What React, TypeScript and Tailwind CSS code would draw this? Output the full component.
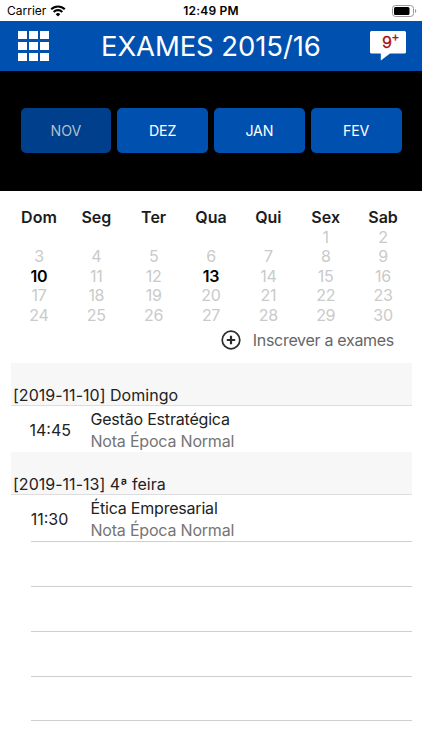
import React from "react";

const months = ["NOV", "DEZ", "JAN", "FEV"];
const weekDays = ["Dom", "Seg", "Ter", "Qua", "Qui", "Sex", "Sab"];
const leadingBlanks = 5;
const examDays = [10, 13];

const sections = [
    { title: "[2019-11-10] Domingo", time: "14:45", name: "Gestão Estratégica", info: "Nota Época Normal" },
    { title: "[2019-11-13] 4ª feira", time: "11:30", name: "Ética Empresarial", info: "Nota Época Normal" },
];

const StatusBar = () => (
    <div className="grid h-[21px] grid-cols-3 items-center bg-white pl-[7px] pr-[5px] text-black">
        <div className="flex items-center gap-[4px]">
            <span className="text-[12px] leading-none">Carrier</span>
            <svg width="16" height="12" viewBox="0 0 16 12" fill="none" stroke="black" strokeWidth="2.1">
                <path d="M1.2 4.3a9.6 9.6 0 0 1 13.6 0" />
                <path d="M3.7 6.9a6.1 6.1 0 0 1 8.6 0" />
                <path d="M8 11.5 5.7 9.2a3.2 3.2 0 0 1 4.6 0z" fill="black" stroke="none" />
            </svg>
        </div>
        <span className="-ml-0.5 text-center text-[12px] font-semibold leading-none tracking-[0.2px]">12:49 PM</span>
        <div className="flex justify-end">
            <svg width="25" height="12" viewBox="0 0 25 12">
                <rect x="0.5" y="0.5" width="21" height="11" rx="3" fill="none" stroke="#999" />
                <rect x="2" y="2" width="15.5" height="8" rx="1.5" fill="black" />
                <path d="M23 4v4a2.2 2.2 0 0 0 0-4z" fill="#999" />
            </svg>
        </div>
    </div>
);

const Header = () => (
    <header className="flex h-[50px] items-center justify-between bg-[#0050b0] pl-[18px] pr-4">
        <button className="grid grid-cols-3 gap-[2.5px]">
            {Array.from({ length: 9 }, (_, index) => (
                <span key={index} className="size-[8.6px] bg-white" />
            ))}
        </button>
        <h1 className="pl-[3px] pt-0.5 text-[27.5px] leading-none tracking-[-0.1px] text-white">EXAMES 2015/16</h1>
        <button className="relative h-[30px] w-9">
            <svg width="36" height="30" viewBox="0 0 36 30" fill="white">
                <path d="M1.5 0h33a1.5 1.5 0 0 1 1.5 1.5v19.5a1.5 1.5 0 0 1-1.5 1.5H20l-9.2 7V22.5H1.5A1.5 1.5 0 0 1 0 21v-19.5A1.5 1.5 0 0 1 1.5 0z" />
            </svg>
            <span className="absolute left-[12px] top-[3px] text-[16px] leading-none text-[#a80d10] [-webkit-text-stroke:0.3px]">9</span>
            <span className="absolute left-[21.5px] top-[0px] text-[12px] leading-none text-[#a80d10] [-webkit-text-stroke:0.3px]">+</span>
        </button>
    </header>
);

const MonthPicker = () => (
    <div className="flex h-[119.5px] items-center bg-black px-[20.5px] pt-px">
        <div className="mb-0.5 grid w-full grid-cols-4 gap-1.5">
            {months.map((month, index) => (
                <button
                    key={month}
                    className={`h-[45px] rounded-[5px] pt-px text-[14.2px] leading-5 tracking-[-0.1px] ${index === 0 ? "bg-[#003f8c] text-[#b3bfcd]" : "bg-[#0050b0] text-white"}`}
                >
                    {month}
                </button>
            ))}
        </div>
    </div>
);

const Calendar = () => (
    <div className="px-[10.3px] pt-[16.5px]">
        <div className="grid grid-cols-7 text-center text-[16px] font-semibold leading-5 text-[#1c1c1e]">
            {weekDays.map((day) => (
                <span key={day}>{day}</span>
            ))}
        </div>
        <div className="mt-[0.6px] grid grid-cols-7 text-center text-[16px] leading-[19.6px] tracking-[-0.3px] text-[#cacaca]">
            {Array.from({ length: leadingBlanks }, (_, index) => (
                <span key={`blank-${index}`} />
            ))}
            {Array.from({ length: 30 }, (_, index) => index + 1).map((day) => (
                <span key={day} className={examDays.includes(day) ? "font-semibold text-black" : ""}>
                    {day}
                </span>
            ))}
        </div>
    </div>
);

const ExamList = () => (
    <div className="ml-[11px] mr-2.5 mt-[13.2px]">
        {sections.map((section, index) => (
            <section key={section.title}>
                <h2 className="flex h-[43px] items-end border-b border-[#dddddd] bg-[#f7f7f7] pl-0.5 text-[16px] leading-5 tracking-[0.02px] text-[#222]">
                    {section.title}
                </h2>
                <div className={`ml-[19.5px] flex items-center pt-0.5 ${index === sections.length - 1 ? "h-[46.8px] border-b border-[#cfcfcf]" : "h-[46.5px]"}`}>
                    <span className="-ml-px w-10 text-center text-[16px] text-[#222]">{section.time}</span>
                    <div className="ml-[21px] text-[16px] leading-[22px] tracking-[-0.2px]">
                        <p className="text-[#222]">{section.name}</p>
                        <p className="text-[#757575]">{section.info}</p>
                    </div>
                </div>
            </section>
        ))}
        {[0, 1, 2, 3].map((row) => (
            <div key={row} className="ml-[19.5px] h-[44.85px] border-b border-[#cfcfcf]" />
        ))}
    </div>
);

const App = () => {
    return (
        <div className="h-[750px] w-[422px] overflow-hidden bg-white font-['Inter',sans-serif]">
            <StatusBar />
            <Header />
            <MonthPicker />
            <Calendar />
            <button className="ml-auto mr-7 mt-1 flex items-center gap-3 text-[16px] leading-5 tracking-[-0.3px] text-[#666]">
                <svg width="20" height="20" viewBox="0 0 20 20" fill="none" stroke="#2c2c2c">
                    <circle cx="10" cy="10" r="8.8" strokeWidth="1.7" />
                    <path d="M10 5.8v8.4M5.8 10h8.4" strokeWidth="2.2" />
                </svg>
                Inscrever a exames
            </button>
            <ExamList />
        </div>
    );
};

export default App;
